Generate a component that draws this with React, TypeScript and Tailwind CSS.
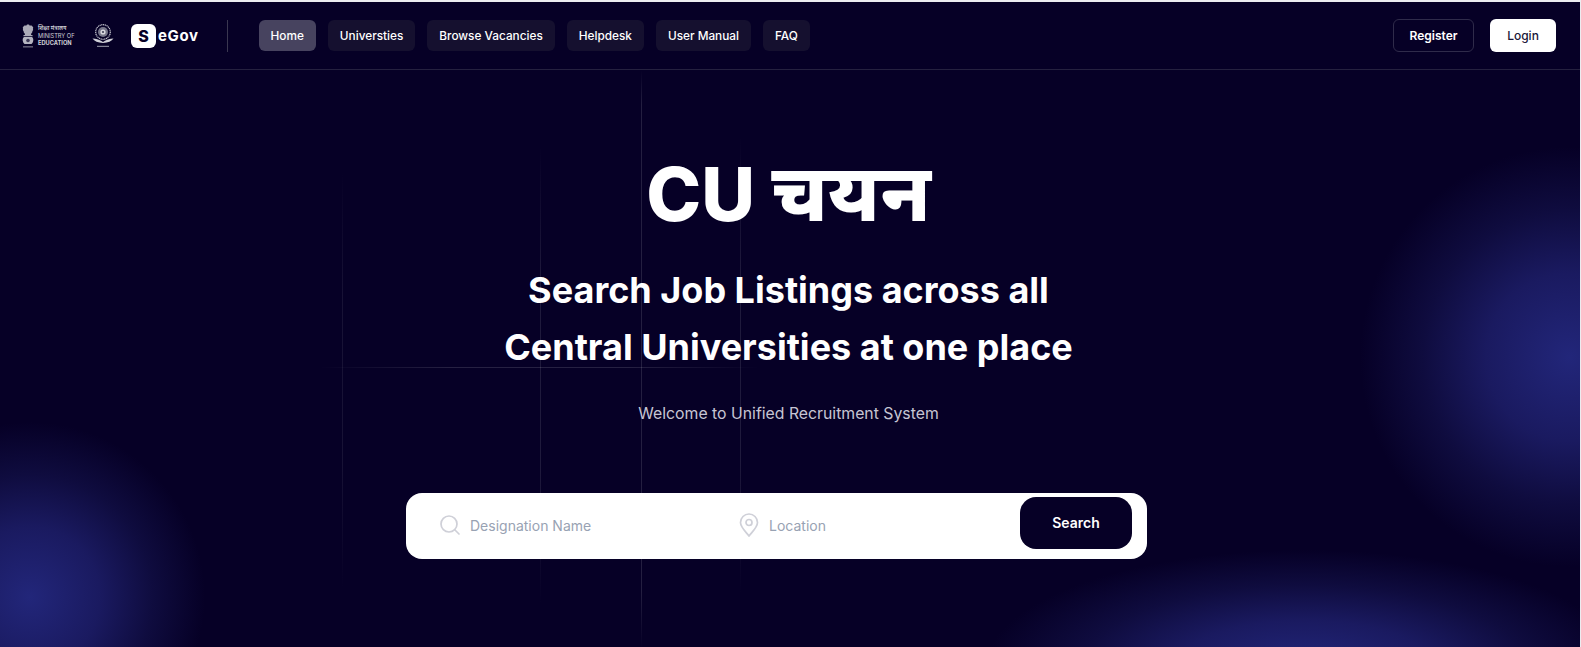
const navItems = ["Home", "Universties", "Browse Vacancies", "Helpdesk", "User Manual", "FAQ"];

function Emblem() {
  return (
    <svg viewBox="0 0 14 24" className="h-6 w-[14px] text-[#d4d4dc]" fill="currentColor">
      <path d="M7 .5c1 0 1.500.6 1.800 1.200 1-.6 2.400-.2 2.700.8.700.4 1 1.500.4 2.200.5.800.2 2-.6 2.400.3.800-.1 1.800-.9 2.100L10 11H4l-.4-1.800c-.8-.3-1.200-1.300-.9-2.100-.8-.4-1.100-1.600-.6-2.400-.6-.7-.3-1.800.4-2.200.3-1 1.700-1.400 2.700-.8C5.500 1.100 6 .5 7 .5z" opacity="0.8" />
      <rect x="2.500" y="11.200" width="9" height="1" />
      <path d="M3 13h8c1.200 1 1.500 2.500 1.200 4-.2 1.200-.8 2.200-1.700 3h-7c-.9-.8-1.500-1.800-1.700-3-.3-1.500 0-3 1.200-4z" opacity="0.85" />
      <circle cx="7" cy="16.500" r="1.800" fill="#060026" opacity="0.7" />
      <rect x="2" y="22.300" width="10" height="1.100" opacity="0.6" />
    </svg>
  );
}

function Seal() {
  return (
    <svg viewBox="0 0 22 24" className="h-6 w-[22px]" fill="none">
      <circle cx="11" cy="8" r="7.300" stroke="#c4c4ce" strokeWidth="1.200" strokeDasharray="1.200 0.600" />
      <circle cx="11" cy="8" r="5" fill="#77778a" />
      <circle cx="11" cy="8" r="2.600" fill="#d8d8de" />
      <circle cx="11" cy="8" r="1.100" fill="#44445a" />
      <path d="M.5 14.500c3.500.2 6.500 1 8.500 2.300l2 1.200 2-1.200c2-1.300 5-2.100 8.500-2.300-1.800 2.600-5.500 4.300-10.500 4.500C6 18.800 2.300 17.100.5 14.500z" fill="#d0d0d8" />
      <rect x="5" y="21.800" width="12" height="1.100" fill="#8f8fa0" />
    </svg>
  );
}

export default function App() {
  return (
    <div className="relative h-[647px] overflow-hidden border-t-2 border-r border-[#ececf0] bg-[#060026] font-['Inter',sans-serif] text-white">
      {/* glow blobs */}
      <div className="pointer-events-none absolute right-[-200px] top-[145px] h-[420px] w-[420px] rounded-full bg-[radial-gradient(closest-side,#22267a,#1a1a60_40%,#0f0c3f_70%,transparent)]" />
      <div className="pointer-events-none absolute left-[-145px] top-[420px] h-[350px] w-[350px] rounded-full bg-[radial-gradient(closest-side,#22267a,#1a1a60_40%,#0f0c3f_70%,transparent)]" />
      <div className="pointer-events-none absolute left-[985px] top-[548px] h-[235px] w-[640px] rounded-full bg-[radial-gradient(closest-side,#22267a,#1a1a60_40%,#0f0c3f_70%,transparent)]" />

      {/* faint grid lines */}
      <div className="pointer-events-none absolute left-[342px] top-[168px] h-[420px] w-px bg-[linear-gradient(transparent,rgba(255,255,255,0.07)_30%,rgba(255,255,255,0.07)_70%,transparent)]" />
      <div className="pointer-events-none absolute left-[540px] top-[143px] h-[460px] w-px bg-[linear-gradient(transparent,rgba(255,255,255,0.1)_30%,rgba(255,255,255,0.1)_70%,transparent)]" />
      <div className="pointer-events-none absolute left-[641px] top-[68px] h-[579px] w-px bg-[linear-gradient(transparent,rgba(255,255,255,0.12)_6%,rgba(255,255,255,0.12)_90%,transparent)]" />
      <div className="pointer-events-none absolute left-[740px] top-[133px] h-[460px] w-px bg-[linear-gradient(transparent,rgba(255,255,255,0.1)_30%,rgba(255,255,255,0.1)_70%,transparent)]" />
      <div className="pointer-events-none absolute left-[320px] top-[365px] h-px w-[440px] bg-[linear-gradient(90deg,transparent,rgba(255,255,255,0.13)_30%,rgba(255,255,255,0.13)_70%,transparent)]" />

      <header className="relative flex h-[68px] items-center justify-between border-b border-[#25213f] pl-[21px] pr-[24px]">
        <div className="flex items-center">
          <div className="flex items-center gap-[3px]">
            <Emblem />
            <div className="flex w-[36px] flex-col text-[5.700px] leading-[7px] text-[#d0d0d8]">
              <span className="font-['Noto_Sans',sans-serif] text-[5.500px] font-semibold">शिक्षा मंत्रालय</span>
              <span className="whitespace-nowrap">MINISTRY OF</span>
              <span className="whitespace-nowrap font-bold">EDUCATION</span>
            </div>
          </div>
          <div className="ml-[18px]">
            <Seal />
          </div>
          <div className="ml-[17px] flex items-center gap-[2px]">
            <span className="flex h-6 w-[25px] items-center justify-center rounded-[6px] bg-white text-[16px] font-extrabold text-[#060026]">S</span>
            <span className="pt-[2px] text-[15px] font-bold tracking-[0.6px]">eGov</span>
          </div>
          <div className="ml-[28px] h-8 w-px bg-[#3a3750]" />
          <nav className="ml-[31px] flex items-center gap-3">
            {navItems.map((item) => (
              <a
                key={item}
                className={`flex h-[31px] items-center rounded-md px-3 pt-[2px] text-[11.800px] font-medium ${
                  item === "Home" ? "bg-[#47435f]" : "bg-[#15102f]"
                }`}
              >
                {item}
              </a>
            ))}
          </nav>
        </div>
        <div className="flex items-center gap-4">
          <button className="flex h-[33px] w-[81px] items-center justify-center rounded-md border border-[#2f2b4a] text-[12px] font-semibold">
            Register
          </button>
          <button className="flex h-[33px] w-[66px] items-center justify-center rounded-md bg-white text-[12px] font-medium text-[#1a1638]">
            Login
          </button>
        </div>
      </header>

      <main className="relative flex flex-col items-center pr-[3px]">
        <h1 className="mt-[75px] text-[74px] font-extrabold leading-[90px]">
          CU <span className="text-[80px] font-['Noto_Sans',sans-serif]">चयन</span>
        </h1>
        <h2 className="mt-[23px] text-center text-[36px] font-bold leading-[57px]">
          Search Job Listings across all
          <br />
          Central Universities at one place
        </h2>
        <p className="mt-[26px] text-[15.800px] leading-6 text-[#c6c5d3]">Welcome to Unified Recruitment System</p>

        <div className="mr-[24px] mt-[67px] flex h-[66px] w-[741px] rounded-2xl bg-white pl-[34px] pr-[15px] pt-1">
          <div className="flex h-[52px] w-[299px] items-center gap-[10px] pt-1 text-[14px] text-[#98a2b3]">
            <svg viewBox="0 0 20 20" className="h-5 w-5" fill="none" stroke="#cfd0d8" strokeWidth="1.700" strokeLinecap="round">
              <circle cx="9" cy="9" r="8" />
              <path d="M15 15l4 4" />
            </svg>
            <span>Designation Name</span>
          </div>
          <div className="flex h-[52px] flex-1 items-center gap-[10px] pt-1 text-[14px] text-[#98a2b3]">
            <svg viewBox="0 0 20 24" className="h-6 w-5" fill="none" stroke="#cfd0d8" strokeWidth="1.700">
              <path d="M10 23C6 18 1.500 14 1.500 9.500a8.500 8.500 0 0 1 17 0C18.500 14 14 18 10 23z" />
              <circle cx="10" cy="9.500" r="3" />
            </svg>
            <span>Location</span>
          </div>
          <button className="flex h-[52px] w-[112px] items-center justify-center rounded-2xl bg-[#060026] pb-[2px] text-[14px] font-semibold text-white">
            Search
          </button>
        </div>
      </main>
    </div>
  );
}
